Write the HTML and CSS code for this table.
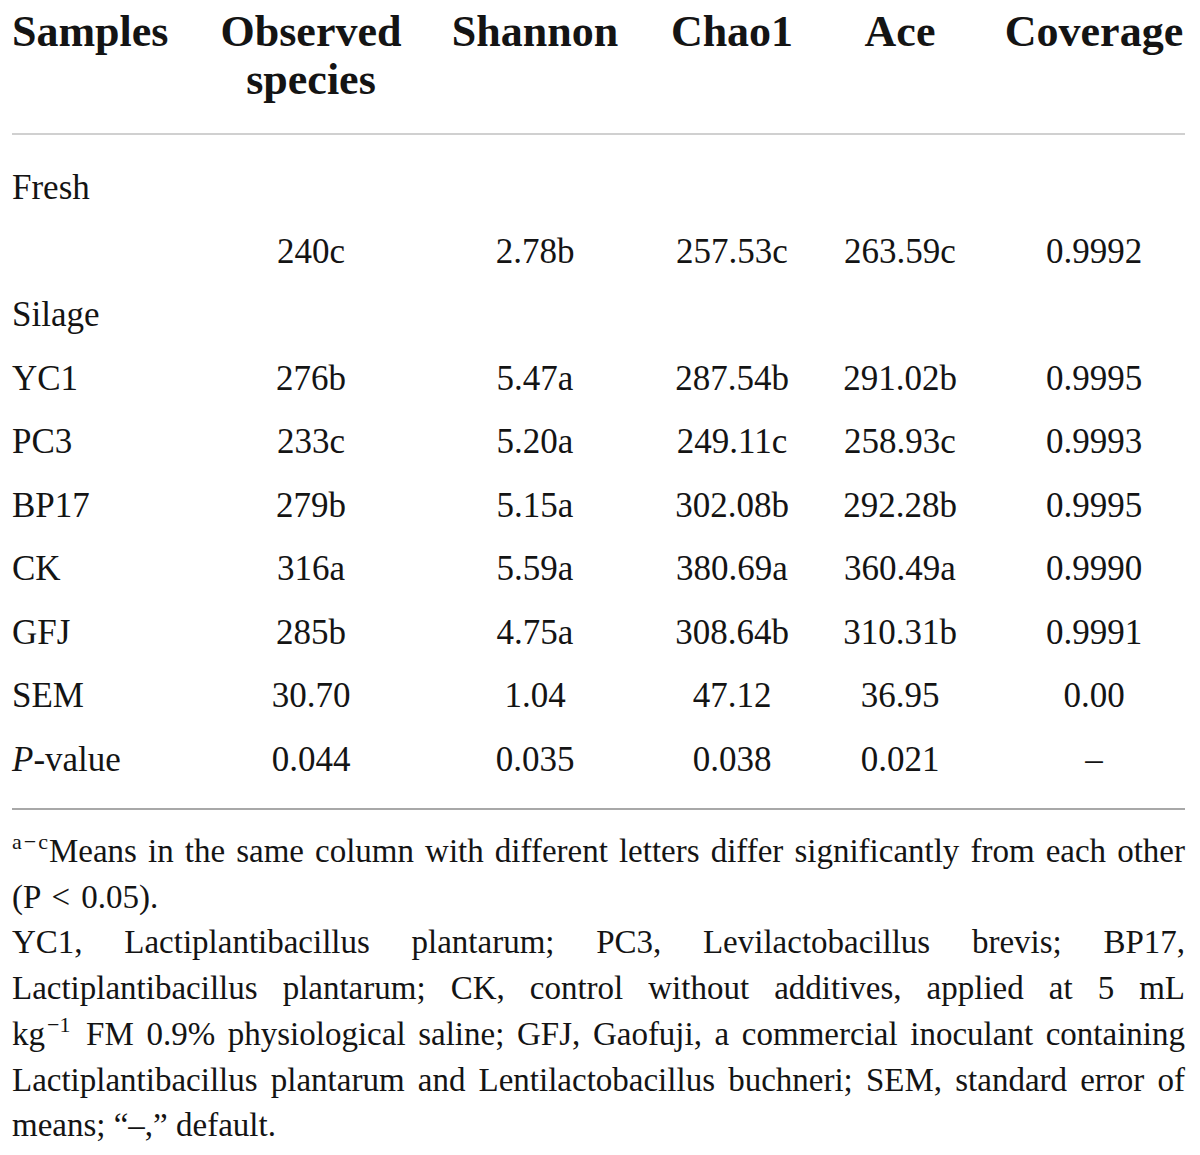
FILE: index.html
```html
<!DOCTYPE html>
<html lang="en">

<head>
  <meta charset="UTF-8">
  <meta name="viewport" content="width=device-width, initial-scale=1.0">
  <title>Alpha diversity</title>
  <link rel="stylesheet" href="styles.css">
</head>

<body>
  <div id="content">
    <table id="diversity">
      <colgroup>
        <col class="c-samples">
        <col class="c-observed">
        <col class="c-shannon">
        <col class="c-chao">
        <col class="c-ace">
        <col class="c-coverage">
      </colgroup>
      <thead>
        <tr>
          <th class="label">Samples</th>
          <th>Observed<br>species</th>
          <th>Shannon</th>
          <th>Chao1</th>
          <th class="ace">Ace</th>
          <th>Coverage</th>
        </tr>
      </thead>
      <tbody>
        <tr>
          <td class="label">Fresh</td>
          <td></td>
          <td></td>
          <td></td>
          <td class="ace"></td>
          <td></td>
        </tr>
        <tr>
          <td class="label"></td>
          <td>240c</td>
          <td>2.78b</td>
          <td>257.53c</td>
          <td class="ace">263.59c</td>
          <td>0.9992</td>
        </tr>
        <tr>
          <td class="label">Silage</td>
          <td></td>
          <td></td>
          <td></td>
          <td class="ace"></td>
          <td></td>
        </tr>
        <tr>
          <td class="label">YC1</td>
          <td>276b</td>
          <td>5.47a</td>
          <td>287.54b</td>
          <td class="ace">291.02b</td>
          <td>0.9995</td>
        </tr>
        <tr>
          <td class="label">PC3</td>
          <td>233c</td>
          <td>5.20a</td>
          <td>249.11c</td>
          <td class="ace">258.93c</td>
          <td>0.9993</td>
        </tr>
        <tr>
          <td class="label">BP17</td>
          <td>279b</td>
          <td>5.15a</td>
          <td>302.08b</td>
          <td class="ace">292.28b</td>
          <td>0.9995</td>
        </tr>
        <tr>
          <td class="label">CK</td>
          <td>316a</td>
          <td>5.59a</td>
          <td>380.69a</td>
          <td class="ace">360.49a</td>
          <td>0.9990</td>
        </tr>
        <tr>
          <td class="label">GFJ</td>
          <td>285b</td>
          <td>4.75a</td>
          <td>308.64b</td>
          <td class="ace">310.31b</td>
          <td>0.9991</td>
        </tr>
        <tr>
          <td class="label">SEM</td>
          <td>30.70</td>
          <td>1.04</td>
          <td>47.12</td>
          <td class="ace">36.95</td>
          <td>0.00</td>
        </tr>
        <tr>
          <td class="label"><i>P</i>-value</td>
          <td>0.044</td>
          <td>0.035</td>
          <td>0.038</td>
          <td class="ace">0.021</td>
          <td>–</td>
        </tr>
      </tbody>
    </table>

    <div id="notes">
      <p>
        <span class="line full"><sup>a<span class="op">−</span>c</sup>Means in the same column with different letters differ significantly from each other</span>
        <span class="line">(P <span class="op">&lt;</span> 0.05).</span>
      </p>
      <p>
        <span class="line full">YC1, Lactiplantibacillus plantarum; PC3, Levilactobacillus brevis; BP17,</span>
        <span class="line full">Lactiplantibacillus plantarum; CK, control without additives, applied at 5 mL</span>
        <span class="line full">kg<sup class="unit">−1</sup> FM 0.9% physiological saline; GFJ, Gaofuji, a commercial inoculant containing</span>
        <span class="line full">Lactiplantibacillus plantarum and Lentilactobacillus buchneri; SEM, standard error of</span>
        <span class="line">means; “–,” default.</span>
      </p>
    </div>
  </div>
</body>

</html>
```

FILE: styles.css
```css
body {
  margin: 0;
  background: #fff;
  color: #141414;
  font-family: "Liberation Serif", "Times New Roman", serif;
}

#content {
  padding: 0 15px 0 12px;
}

#diversity {
  width: 1173px;
  table-layout: fixed;
  border-collapse: collapse;
}

#diversity .c-samples { width: 187px; }
#diversity .c-observed { width: 224px; }
#diversity .c-shannon { width: 224px; }
#diversity .c-chao { width: 170px; }
#diversity .c-ace { width: 186px; }
#diversity .c-coverage { width: 182px; }

#diversity th {
  font-size: 44px;
  font-weight: bold;
  line-height: 48px;
  text-align: center;
  vertical-align: top;
  padding: 8px 0 29px;
  border-bottom: 2px solid #d0d0d0;
  white-space: nowrap;
}

#diversity td {
  font-size: 35px;
  line-height: 39.5px;
  text-align: center;
  padding: 12px 0;
  white-space: nowrap;
}

#diversity .label {
  text-align: left;
}

#diversity .ace {
  padding-right: 20px;
}

#diversity tbody tr:first-child td {
  padding-top: 33px;
}

#diversity tbody tr:last-child td {
  padding-bottom: 29px;
  border-bottom: 2px solid #a8a8a8;
}

#notes {
  margin-top: 19px;
  font-size: 33px;
  line-height: 45.7px;
}

#notes p {
  margin: 0;
}

#notes .line {
  display: block;
  text-align: left;
}

#notes .full {
  text-align: justify;
  text-align-last: justify;
}

#notes sup {
  font-size: 22px;
  line-height: 0;
  vertical-align: 13px;
  margin-right: 1px;
}

#notes sup .op {
  margin: 0 2px;
}

#notes sup.unit {
  margin-left: 2px;
  margin-right: 3px;
}

#notes .op {
  margin: 0 3px;
}
```
